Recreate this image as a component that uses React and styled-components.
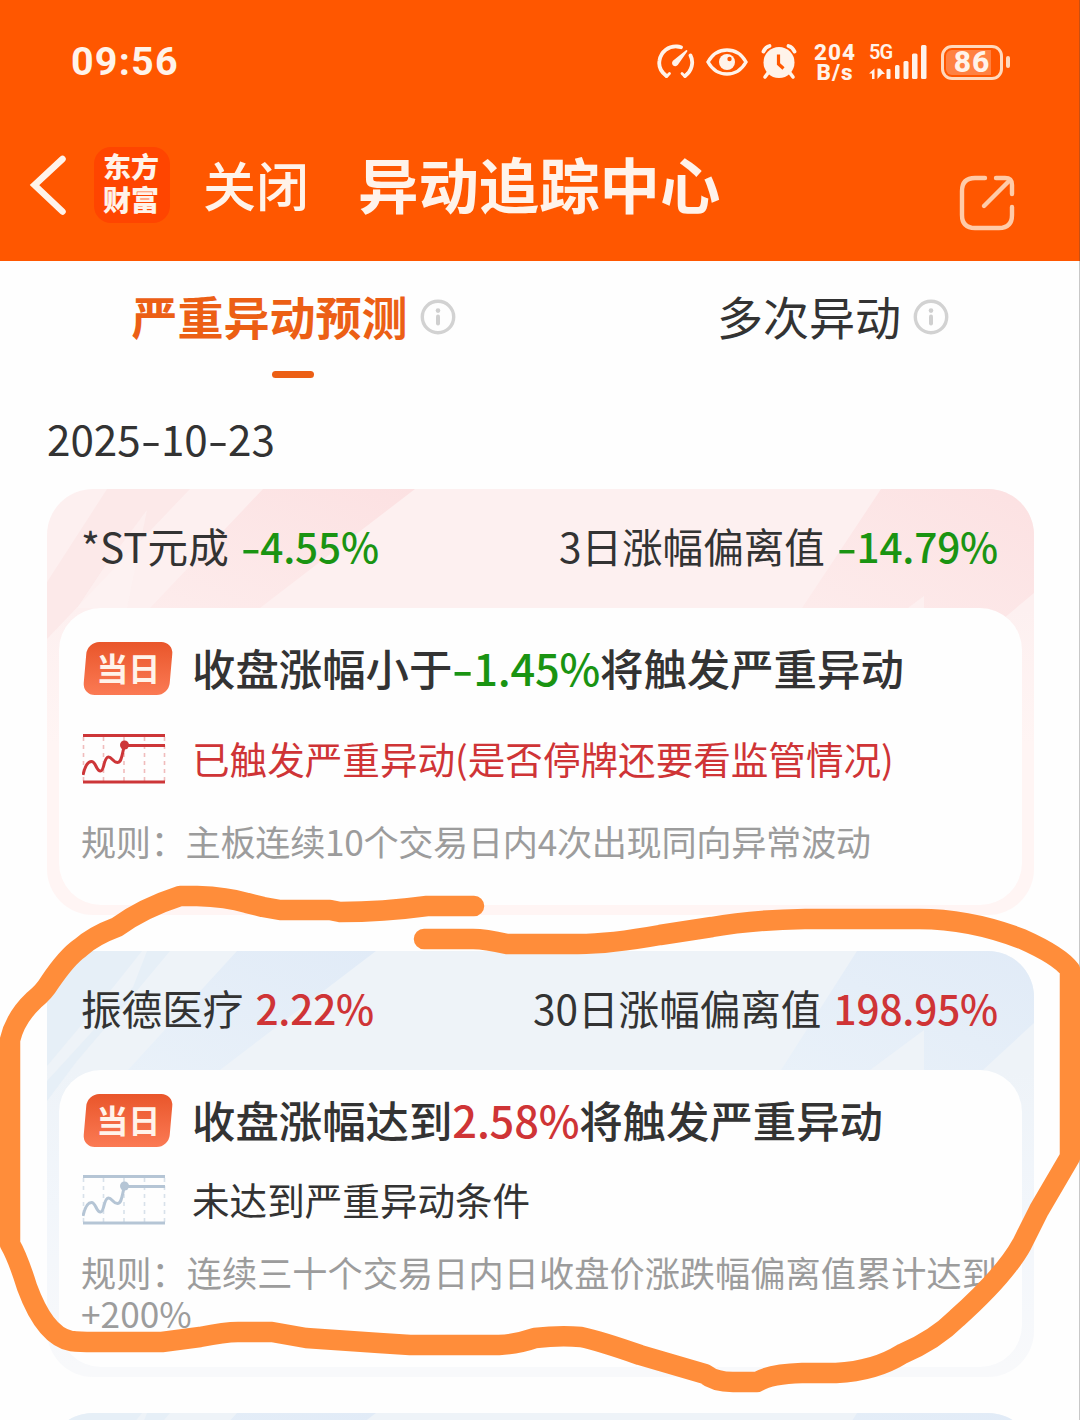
import styled, { createGlobalStyle } from 'styled-components'

const colors = {
    brand: '#ff5700',
    active: '#ec5f15',
    cream: '#fff3ea',
    text: '#333333',
    muted: '#9c9c9c',
    rise: '#cf3436',
    fall: '#1a9412',
    marker: '#ff8d3a',
}

const GlobalStyle = createGlobalStyle`
    * {
        box-sizing: border-box;
    }

    body {
        margin: 0;
        background: #fefefe;
    }
`

const Screen = styled.div`
    position: relative;
    width: 1080px;
    height: 1420px;
    overflow: hidden;
    background: #fefefe;
    color: ${colors.text};
    font-family: 'Noto Sans CJK SC', sans-serif;
    white-space: nowrap;
`

const ScreenEdge = styled.div`
    position: absolute;
    top: 0;
    right: 0;
    width: 1px;
    height: 100%;
    background: rgba(60, 60, 60, 0.28);
`

const Header = styled.header`
    height: 261px;
    background: ${colors.brand};
    color: ${colors.cream};
`

const StatusBar = styled.div`
    display: flex;
    align-items: center;
    justify-content: space-between;
    height: 124px;
    padding: 0 70px 0 71px;
    font-family: Roboto, sans-serif;
`

const Clock = styled.span`
    font-size: 39.5px;
    font-weight: 700;
    line-height: 40px;
    letter-spacing: 1.2px;
`

const StatusIcons = styled.div`
    display: flex;
    align-items: center;
`

const StatusIcon = styled.svg`
    display: block;
    margin-left: ${({ $gap }) => $gap || 0}px;
`

const NetSpeed = styled.div`
    display: flex;
    flex-direction: column;
    width: 46px;
    margin-left: 15px;
    font-size: 22.5px;
    font-weight: 800;
    line-height: 20px;
    text-align: center;
    letter-spacing: 1px;
`

const Signal = styled.div`
    position: relative;
    width: 60px;
    height: 36px;
    margin-left: 10px;
`

const SignalLabel = styled.span`
    position: absolute;
    left: 1px;
    top: -2px;
    font-size: 20px;
    font-weight: 600;
    line-height: 20px;
    letter-spacing: -0.9px;
`

const Battery = styled.div`
    display: flex;
    align-items: center;
    justify-content: center;
    width: 62px;
    height: 35px;
    margin-left: 13px;
    padding: 2px;
    border: 3px solid #ffd9bd;
    border-radius: 11px;
    background: linear-gradient(to right, #ff8142 84%, transparent 84%);
    background-clip: content-box;
    font-size: 30px;
    font-weight: 800;
    line-height: 28px;
    letter-spacing: 1px;
`

const BatteryTip = styled.div`
    width: 4px;
    height: 12px;
    margin-left: 3px;
    border-radius: 2px;
    background: #ffd9bd;
`

const NavBar = styled.nav`
    display: flex;
    align-items: center;
    height: 122px;
    padding-left: 28px;
`

const Logo = styled.div`
    display: flex;
    flex-direction: column;
    justify-content: center;
    width: 76px;
    height: 76px;
    margin-left: 26px;
    padding: 0 2px 4px 0;
    border-radius: 17px;
    background: #ff4500;
    font-size: 28px;
    font-weight: 900;
    line-height: 33px;
    text-align: center;
`

const CloseText = styled.span`
    margin: -2px 0 0 33px;
    font-size: 53px;
    font-weight: 500;
    line-height: 60px;
`

const Title = styled.h1`
    margin: -4px 0 0 49px;
    font-size: 60.4px;
    font-weight: 700;
    line-height: 70px;
`

const ShareIcon = styled.svg`
    margin: 36px 0 0 239px;
`

const Tabs = styled.div`
    display: flex;
    height: 130px;
    padding-left: 131px;
`

const Tab = styled.div`
    display: flex;
    flex-direction: column;
    align-items: center;
    width: ${({ $width }) => $width}px;
    margin-left: ${({ $offset }) => $offset || 0}px;
    padding-top: 24px;
`

const TabLabel = styled.div`
    display: flex;
    align-items: center;
    gap: 12px;
    color: ${({ $active }) => ($active ? colors.active : colors.text)};
    font-size: 46px;
    font-weight: ${({ $active }) => ($active ? 700 : 400)};
    line-height: 60px;

    svg {
        margin-top: 4px;
    }
`

const TabBar = styled.div`
    width: 42px;
    height: 7px;
    margin: 26px 2px 0 0;
    border-radius: 4px;
    background: ${colors.active};
`

const DateLine = styled.div`
    height: 98px;
    padding: 20px 0 0 47px;
    font-size: 42.2px;
    line-height: 54px;
`

const Dash = styled.span`
    display: inline-block;
    width: 0.48em;
    text-align: center;
    transform: scaleX(1.4);
`

const CardList = styled.div`
    display: flex;
    flex-direction: column;
    gap: 36px;
    padding: 0 46px 0 47px;
`

const Card = styled.section`
    position: relative;
    height: 426px;
    flex-shrink: 0;
    padding: 0 12px;
    overflow: hidden;
    border-radius: 46px;
    background: ${({ $tone }) => ($tone === 'pink'
        ? 'linear-gradient(#fdf0f0 28%, #fff5f4 60%)'
        : 'linear-gradient(#eef3f8 28%, #f2f6fb 60%, #f8f9fb 98%)')};
`

const CardPattern = styled.svg`
    position: absolute;
    left: 0;
    top: 0;
`

const CardHeader = styled.div`
    position: relative;
    display: flex;
    align-items: center;
    justify-content: space-between;
    height: 119px;
    padding: 0 24px 5px 22px;
    font-size: 40.6px;
    line-height: 60px;
`

const Figure = styled.span`
    margin-left: ${({ $gap }) => $gap || 0}px;
    color: ${({ $up }) => ($up ? colors.rise : colors.fall)};
    font-weight: 500;
    letter-spacing: -0.2px;
`

const CardBody = styled.div`
    position: relative;
    height: 297px;
    padding: ${({ $compact }) => ($compact ? '24px' : '34px')} 20px 0 22px;
    border-radius: 42px;
    background: #fefefe;
`

const Row = styled.div`
    display: flex;
    align-items: center;
    height: 53px;
    margin-bottom: ${({ $below }) => $below}px;
`

const DayBadge = styled.div`
    display: flex;
    align-items: center;
    justify-content: center;
    width: 86px;
    height: 53px;
    margin: 0 21px 0 4px;
    border-radius: 12px;
    background: linear-gradient(#e9562b, #fb7a54);
    transform: skewX(-5deg);

    span {
        margin-top: -4px;
        color: ${colors.cream};
        font-size: 32px;
        font-weight: 700;
        line-height: 40px;
        transform: skewX(5deg);
    }
`

const Forecast = styled.div`
    margin-top: -3px;
    font-size: 43.4px;
    font-weight: 500;
    line-height: 53px;
`

const TrendIcon = styled.svg`
    flex-shrink: 0;
    margin: 0 26px 0 1px;
`

const Verdict = styled.div`
    margin-top: -2px;
    color: ${({ $hit }) => ($hit ? colors.rise : colors.text)};
    font-size: 37.6px;
    line-height: 50px;
`

const Rule = styled.p`
    margin: 0;
    color: ${colors.muted};
    font-size: 35.2px;
    line-height: 41px;
    letter-spacing: ${({ $spacing }) => $spacing || 0}px;
    white-space: normal;
`

const Marker = styled.svg`
    position: absolute;
    left: 0;
    top: 0;
    pointer-events: none;
`

function InfoIcon() {
    return (
        <svg width='36' height='36' viewBox='0 0 36 36' fill='none'>
            <circle cx='18' cy='18' r='15.7' stroke='#d2d2d2' strokeWidth='3.4'/>
            <circle cx='18' cy='11.6' r='2.3' fill='#cfcfcf'/>
            <path d='M18 17.5v7' stroke='#cfcfcf' strokeWidth='4' strokeLinecap='round'/>
        </svg>
    )
}

function Trend({ hit }) {
    const line = hit ? '#cd3638' : '#b5c5d5'
    const grid = hit ? '#f0bcbc' : '#d8e1ea'

    return (
        <TrendIcon width='84' height='52' viewBox='0 0 84 52' fill='none'>
            <path d='M1.5 4v44M21.5 4v44M42 4v44M62.5 4v44M82.5 4v44' stroke={grid} strokeWidth='1.6' strokeDasharray='4 4'/>
            <path d='M1 2.5h82M1 49h82' stroke={line} strokeWidth='3'/>
            <path d='M42 12.5h41' stroke={line} strokeWidth='3'/>
            <path
                d='M1 42C3 33 6 28.5 9.500 28.500C14 28.500 14 38 18.500 38C22.500 38 21.500 24 26.500 24C30 24 31 29.500 35.500 29.500C40 29.500 40 20 42.500 12.500'
                stroke={line}
                strokeWidth='3'
            />
            <circle cx='42.5' cy='12' r='4.5' fill={line}/>
        </TrendIcon>
    )
}

function StatusBarIcons() {
    return (
        <StatusIcons>
            <StatusIcon width='38' height='36' viewBox='0 0 38 36' fill='none' stroke={colors.cream}>
                <path d='M9.5 32C4 28 1.500 22 2.500 16.500C4 7 12 2 20 2.500Q22 2.600 24 3.200' strokeWidth='3.8' strokeLinecap='round'/>
                <path d='M33.500 11.500C37 18 35 27 28 32' strokeWidth='3.8' strokeLinecap='round'/>
                <path d='M29.500 7L16.500 17.500a2 2 0 0 0 3.500 3Z' fill={colors.cream} strokeWidth='1.800' strokeLinejoin='round'/>
                <path d='M7 29.500l2.500 3l3-3M25 29.500l3 3l2.500-3' strokeWidth='2.800' strokeLinecap='round' strokeLinejoin='round'/>
            </StatusIcon>
            <StatusIcon $gap={11} width='42' height='30' viewBox='0 0 42 30' fill='none'>
                <path d='M2 15C11-1 31-1 40 15C31 31 11 31 2 15Z' stroke={colors.cream} strokeWidth='3.4'/>
                <circle cx='21' cy='15' r='8' fill={colors.cream}/>
                <circle cx='23.500' cy='12' r='2.200' fill={colors.brand}/>
            </StatusIcon>
            <StatusIcon $gap={13} width='36' height='36' viewBox='0 0 36 36' fill='none'>
                <circle cx='18' cy='18.500' r='15.500' fill={colors.cream}/>
                <path d='M2.500 7.500Q4.500 3 8.500 2M27.500 2Q31.500 3 33.500 7.500' stroke={colors.cream} strokeWidth='3.800' strokeLinecap='round'/>
                <path d='M7 29l-3 4M29 29l3 4' stroke={colors.cream} strokeWidth='3.600' strokeLinecap='round'/>
                <path d='M17.500 10.500v9.500l5 4.500' stroke={colors.brand} strokeWidth='3.200'/>
            </StatusIcon>
            <NetSpeed>
                <span>204</span>
                <span>B/s</span>
            </NetSpeed>
            <Signal>
                <SignalLabel>5G</SignalLabel>
                <svg width='60' height='36' viewBox='0 0 60 36' fill={colors.cream}>
                    <path d='M1 29.500l5.500-5v10.500H4v-5.500ZM9.500 24.500h2.500l5 5.500h-3l-4.500 5Z'/>
                    <rect x='18.5' y='25' width='4' height='10' rx='1'/>
                    <rect x='27' y='21' width='4.500' height='14' rx='1.500'/>
                    <rect x='35.5' y='17' width='5' height='18' rx='1.500'/>
                    <rect x='44' y='9.5' width='5.500' height='25.500' rx='1.500'/>
                    <rect x='53' y='1' width='5.500' height='34' rx='1.500'/>
                </svg>
            </Signal>
            <Battery>86</Battery>
            <BatteryTip/>
        </StatusIcons>
    )
}

function Pattern({ tone }) {
    if (tone === 'pink') {
        return (
            <CardPattern width='987' height='160' viewBox='0 0 987 160'>
                <defs>
                    <linearGradient id='pinkBand' x1='0' y1='1' x2='1' y2='0'>
                        <stop offset='0' stopColor='#fdecec'/>
                        <stop offset='1' stopColor='#fce1e2'/>
                    </linearGradient>
                </defs>
                <path d='M60 0H143L0 150V93Z' fill='#fce9e9'/>
                <path d='M216 0H368L213 119H103Z' fill='url(#pinkBand)'/>
                <path d='M100 21L56 80L30 119H80L90 70Z' fill='#fdf3f3' opacity='0.6'/>
                <path d='M834 0H987V104L950 135L900 119H755Z' fill='url(#pinkBand)'/>
                <path d='M877 107V119H861Z' fill='#fdf0f0'/>
            </CardPattern>
        )
    }

    return (
        <CardPattern width='987' height='160' viewBox='0 0 987 160'>
            <defs>
                <linearGradient id='blueBand' x1='0' y1='1' x2='1' y2='0'>
                    <stop offset='0' stopColor='#e9f1f9'/>
                    <stop offset='1' stopColor='#e1ebf7'/>
                </linearGradient>
            </defs>
            <path d='M0 0H95L68 34L0 115Z' fill='#e6eff7'/>
            <path d='M100 0H123L88 42L30 110L0 150V130L86 36Z' fill='#e6eff7'/>
            <path d='M190 0H329L173 119H81Z' fill='url(#blueBand)'/>
            <path d='M810 0H987V72L936 119H734Z' fill='url(#blueBand)'/>
            <path d='M877 79V119H823Z' fill='#eef3f8'/>
        </CardPattern>
    )
}

const stocks = [
    {
        tone: 'pink',
        name: '*ST元成',
        change: '-4.55%',
        up: false,
        period: '3日涨幅偏离值',
        deviation: '-14.79%',
        condition: '收盘涨幅小于',
        threshold: '-1.45%',
        verdict: '已触发严重异动(是否停牌还要看监管情况)',
        hit: true,
        rule: '规则：主板连续10个交易日内4次出现同向异常波动',
    },
    {
        tone: 'blue',
        name: '振德医疗',
        change: '2.22%',
        up: true,
        period: '30日涨幅偏离值',
        deviation: '198.95%',
        condition: '收盘涨幅达到',
        threshold: '2.58%',
        verdict: '未达到严重异动条件',
        hit: false,
        rule: '规则：连续三十个交易日内日收盘价涨跌幅偏离值累计达到+200%',
    },
]

// Hyphens are set wider than the font draws them
function Digits({ value }) {
    return value.split(/(-)/).map((part, i) => (part === '-' ? <Dash key={i}>-</Dash> : part))
}

function StockCard({ stock }) {
    return (
        <Card $tone={stock.tone}>
            <Pattern tone={stock.tone}/>
            <CardHeader>
                <span>{stock.name} <Figure $up={stock.up} $gap={3}><Digits value={stock.change}/></Figure></span>
                <span>{stock.period} <Figure $up={stock.up} $gap={3}><Digits value={stock.deviation}/></Figure></span>
            </CardHeader>
            <CardBody $compact={!stock.hit}>
                <Row $below={stock.hit ? 37 : 26}>
                    <DayBadge><span>当日</span></DayBadge>
                    <Forecast>
                        {stock.condition}
                        <Figure $up={stock.up}><Digits value={stock.threshold}/></Figure>
                        将触发严重异动
                    </Forecast>
                </Row>
                <Row $below={stock.hit ? 35 : 25}>
                    <Trend hit={stock.hit}/>
                    <Verdict $hit={stock.hit}>{stock.verdict}</Verdict>
                </Row>
                <Rule $spacing={stock.hit ? -0.33 : 0.04}>{stock.rule}</Rule>
            </CardBody>
        </Card>
    )
}

export default function App() {
    return (
        <Screen>
            <GlobalStyle/>
            <Header>
                <StatusBar>
                    <Clock>09:56</Clock>
                    <StatusBarIcons/>
                </StatusBar>
                <NavBar>
                    <svg width='40' height='64' viewBox='0 0 40 64' fill='none'>
                        <path d='M34.5 6L6.500 32L34.500 58.500' stroke={colors.cream} strokeWidth='6.500' strokeLinecap='round'/>
                    </svg>
                    <Logo>
                        <span>东方</span>
                        <span>财富</span>
                    </Logo>
                    <CloseText>关闭</CloseText>
                    <Title>异动追踪中心</Title>
                    <ShareIcon width='56' height='56' viewBox='0 0 56 56' fill='none' stroke='#ffcba8' strokeWidth='4.4' strokeLinecap='round'>
                        <path d='M26 3H16Q3 3 3 16V40Q3 53 16 53H40Q53 53 53 40V32'/>
                        <path d='M37 3H46Q53 3 53 10V19'/>
                        <path d='M51 5L25 31'/>
                    </ShareIcon>
                </NavBar>
            </Header>
            <Tabs>
                <Tab $width={325}>
                    <TabLabel $active>严重异动预测 <InfoIcon/></TabLabel>
                    <TabBar/>
                </Tab>
                <Tab $width={230} $offset={262}>
                    <TabLabel>多次异动 <InfoIcon/></TabLabel>
                </Tab>
            </Tabs>
            <DateLine><Digits value='2025-10-23'/></DateLine>
            <CardList>
                {stocks.map(stock => <StockCard key={stock.name} stock={stock}/>)}
                <Card $tone='blue'>
                    <Pattern tone='blue'/>
                </Card>
            </CardList>
            <ScreenEdge/>
            <Marker width='1080' height='1420' viewBox='0 0 1080 1420' fill='none'>
                <path
                    d='M474 906H427Q383 912 340 912L330 910H280L263 907L247 903Q227 897 197 896H180Q143 908 117 927Q93 936 80 948Q67 957 50 982Q44 992 34 1000Q15 1018 10 1040V1244Q18 1258 27 1287Q45 1336 71 1341Q80 1342 93 1342H162L200 1337Q225 1332 238 1332H272L306 1338L379 1343L410 1345H499Q518 1344 535 1338Q560 1335 581 1337Q600 1341 640 1355L705 1374Q715 1382 733 1382H757Q770 1374 802 1373H836Q875 1371 902 1354Q935 1340 957 1318Q1005 1275 1022 1244L1039 1210L1070 1157V970Q1060 956 1022 939Q970 919 919 919H805Q750 920 712 927L660 935Q610 944 578 944H507Q485 939 473 939H424'
                    stroke={colors.marker}
                    strokeWidth='20.500'
                    strokeLinecap='round'
                    strokeLinejoin='round'
                />
            </Marker>
        </Screen>
    )
}
